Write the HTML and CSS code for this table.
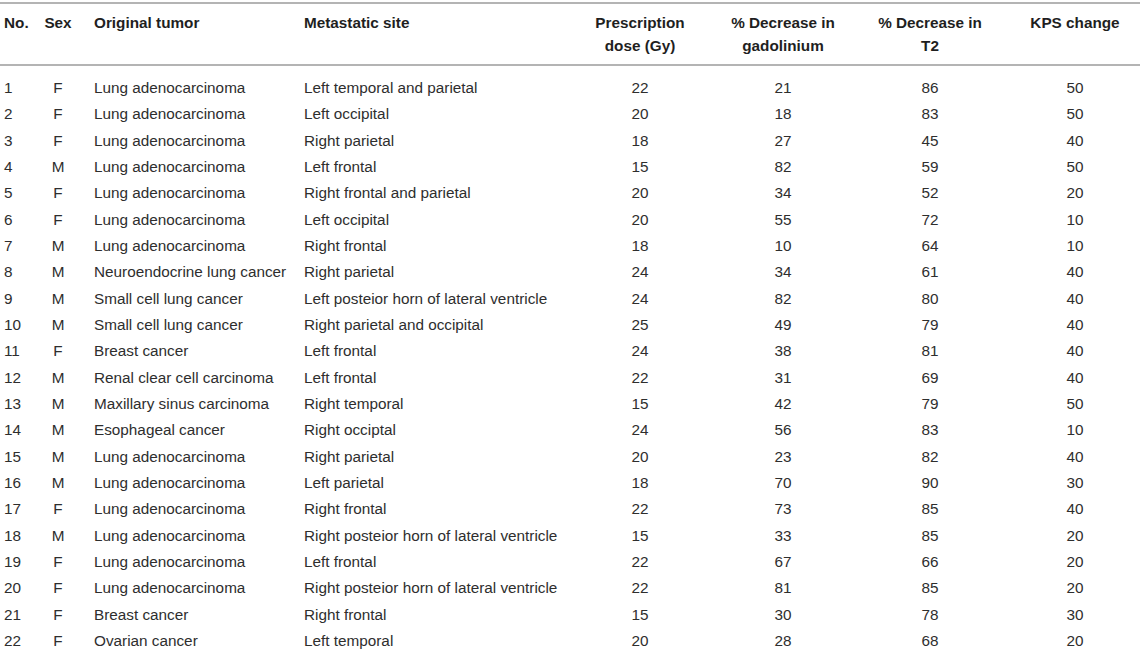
FILE: index.html
```html
<!DOCTYPE html>
<html>
<head>
<meta charset="utf-8">
<link rel="stylesheet" href="styles.css">
</head>
<body>
<table class="data">
<colgroup>
<col class="c-no"><col class="c-sex"><col class="c-tumor"><col class="c-site"><col class="c-dose"><col class="c-gad"><col class="c-t2"><col class="c-kps">
</colgroup>
<thead>
<tr>
<th class="l no">No.</th>
<th class="c">Sex</th>
<th class="l tumor">Original tumor</th>
<th class="l">Metastatic site</th>
<th class="c">Prescription<br>dose (Gy)</th>
<th class="c">% Decrease in<br>gadolinium</th>
<th class="c">% Decrease in<br>T2</th>
<th class="c kps">KPS change</th>
</tr>
</thead>
<tbody>
<tr class="first"><td class="l no">1</td><td class="c">F</td><td class="l tumor">Lung adenocarcinoma</td><td class="l">Left temporal and parietal</td><td class="c">22</td><td class="c">21</td><td class="c">86</td><td class="c kps">50</td></tr>
<tr><td class="l no">2</td><td class="c">F</td><td class="l tumor">Lung adenocarcinoma</td><td class="l">Left occipital</td><td class="c">20</td><td class="c">18</td><td class="c">83</td><td class="c kps">50</td></tr>
<tr><td class="l no">3</td><td class="c">F</td><td class="l tumor">Lung adenocarcinoma</td><td class="l">Right parietal</td><td class="c">18</td><td class="c">27</td><td class="c">45</td><td class="c kps">40</td></tr>
<tr><td class="l no">4</td><td class="c">M</td><td class="l tumor">Lung adenocarcinoma</td><td class="l">Left frontal</td><td class="c">15</td><td class="c">82</td><td class="c">59</td><td class="c kps">50</td></tr>
<tr><td class="l no">5</td><td class="c">F</td><td class="l tumor">Lung adenocarcinoma</td><td class="l">Right frontal and parietal</td><td class="c">20</td><td class="c">34</td><td class="c">52</td><td class="c kps">20</td></tr>
<tr><td class="l no">6</td><td class="c">F</td><td class="l tumor">Lung adenocarcinoma</td><td class="l">Left occipital</td><td class="c">20</td><td class="c">55</td><td class="c">72</td><td class="c kps">10</td></tr>
<tr><td class="l no">7</td><td class="c">M</td><td class="l tumor">Lung adenocarcinoma</td><td class="l">Right frontal</td><td class="c">18</td><td class="c">10</td><td class="c">64</td><td class="c kps">10</td></tr>
<tr><td class="l no">8</td><td class="c">M</td><td class="l tumor">Neuroendocrine lung cancer</td><td class="l">Right parietal</td><td class="c">24</td><td class="c">34</td><td class="c">61</td><td class="c kps">40</td></tr>
<tr><td class="l no">9</td><td class="c">M</td><td class="l tumor">Small cell lung cancer</td><td class="l">Left posteior horn of lateral ventricle</td><td class="c">24</td><td class="c">82</td><td class="c">80</td><td class="c kps">40</td></tr>
<tr><td class="l no">10</td><td class="c">M</td><td class="l tumor">Small cell lung cancer</td><td class="l">Right parietal and occipital</td><td class="c">25</td><td class="c">49</td><td class="c">79</td><td class="c kps">40</td></tr>
<tr><td class="l no">11</td><td class="c">F</td><td class="l tumor">Breast cancer</td><td class="l">Left frontal</td><td class="c">24</td><td class="c">38</td><td class="c">81</td><td class="c kps">40</td></tr>
<tr><td class="l no">12</td><td class="c">M</td><td class="l tumor">Renal clear cell carcinoma</td><td class="l">Left frontal</td><td class="c">22</td><td class="c">31</td><td class="c">69</td><td class="c kps">40</td></tr>
<tr><td class="l no">13</td><td class="c">M</td><td class="l tumor">Maxillary sinus carcinoma</td><td class="l">Right temporal</td><td class="c">15</td><td class="c">42</td><td class="c">79</td><td class="c kps">50</td></tr>
<tr><td class="l no">14</td><td class="c">M</td><td class="l tumor">Esophageal cancer</td><td class="l">Right occiptal</td><td class="c">24</td><td class="c">56</td><td class="c">83</td><td class="c kps">10</td></tr>
<tr><td class="l no">15</td><td class="c">M</td><td class="l tumor">Lung adenocarcinoma</td><td class="l">Right parietal</td><td class="c">20</td><td class="c">23</td><td class="c">82</td><td class="c kps">40</td></tr>
<tr><td class="l no">16</td><td class="c">M</td><td class="l tumor">Lung adenocarcinoma</td><td class="l">Left parietal</td><td class="c">18</td><td class="c">70</td><td class="c">90</td><td class="c kps">30</td></tr>
<tr><td class="l no">17</td><td class="c">F</td><td class="l tumor">Lung adenocarcinoma</td><td class="l">Right frontal</td><td class="c">22</td><td class="c">73</td><td class="c">85</td><td class="c kps">40</td></tr>
<tr><td class="l no">18</td><td class="c">M</td><td class="l tumor">Lung adenocarcinoma</td><td class="l">Right posteior horn of lateral ventricle</td><td class="c">15</td><td class="c">33</td><td class="c">85</td><td class="c kps">20</td></tr>
<tr><td class="l no">19</td><td class="c">F</td><td class="l tumor">Lung adenocarcinoma</td><td class="l">Left frontal</td><td class="c">22</td><td class="c">67</td><td class="c">66</td><td class="c kps">20</td></tr>
<tr><td class="l no">20</td><td class="c">F</td><td class="l tumor">Lung adenocarcinoma</td><td class="l">Right posteior horn of lateral ventricle</td><td class="c">22</td><td class="c">81</td><td class="c">85</td><td class="c kps">20</td></tr>
<tr><td class="l no">21</td><td class="c">F</td><td class="l tumor">Breast cancer</td><td class="l">Right frontal</td><td class="c">15</td><td class="c">30</td><td class="c">78</td><td class="c kps">30</td></tr>
<tr><td class="l no">22</td><td class="c">F</td><td class="l tumor">Ovarian cancer</td><td class="l">Left temporal</td><td class="c">20</td><td class="c">28</td><td class="c">68</td><td class="c kps">20</td></tr>
</tbody>
</table>
</body>
</html>
```

FILE: styles.css
```css
html, body {
  margin: 0;
  padding: 0;
  background: #ffffff;
}
body {
  padding-top: 2px;
  font-family: "Liberation Sans", Arial, Helvetica, sans-serif;
  font-size: 15.3px;
  color: #2e2e2e;
}
.data {
  width: 1140px;
  table-layout: fixed;
  border-collapse: collapse;
  border-top: 2px solid #b4b4b4;
}
.c-no { width: 38px; }
.c-sex { width: 40px; }
.c-tumor { width: 222px; }
.c-site { width: 270px; }
.c-dose { width: 140px; }
.c-gad { width: 146px; }
.c-t2 { width: 148px; }
.c-kps { width: 136px; }

.data th {
  font-weight: bold;
  line-height: 23px;
  vertical-align: top;
  padding: 7px 0 7px 0;
  border-bottom: 2px solid #b4b4b4;
  color: #1f1f1f;
}
.data td {
  line-height: 26.33px;
  padding: 0;
  white-space: nowrap;
}
.data tr.first td {
  padding-top: 9px;
}
.l { text-align: left; }
.c { text-align: center; }
.data th.l, .data td.l { padding-left: 4px; }
.data th.tumor, .data td.tumor { padding-left: 16px; }
.data th.kps, .data td.kps { padding-left: 6px; }
```
